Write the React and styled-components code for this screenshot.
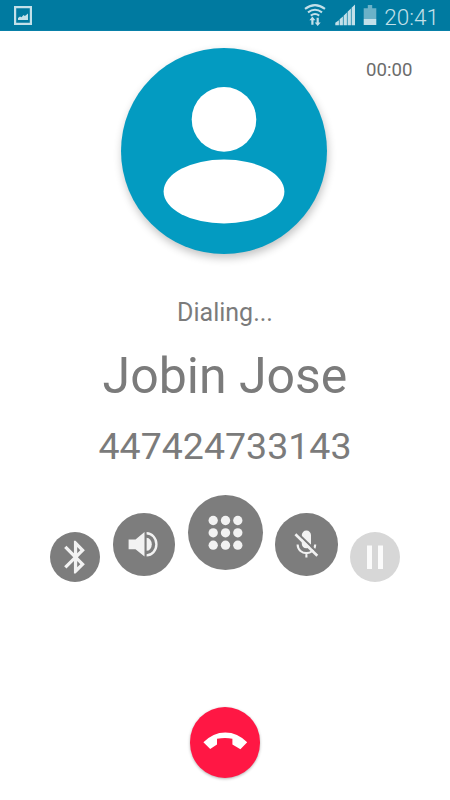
import React from "react";
import styled, { createGlobalStyle } from "styled-components";

const GlobalStyle = createGlobalStyle`
  body {
    margin: 0;
    background: #fff;
    font-family: Roboto, sans-serif;
  }
`;

const Screen = styled.main`
  display: flex;
  flex-direction: column;
  align-items: center;
  width: 450px;
  height: 800px;
  overflow: hidden;
  background: #fff;
`;

const StatusBar = styled.header`
  display: flex;
  align-items: center;
  box-sizing: border-box;
  width: 100%;
  height: 31px;
  flex: none;
  background: #007aa0;
  border-bottom: 1px solid #0880a8;
`;

const StatusIcons = styled.svg`
  display: block;
  width: ${(p) => p.$width}px;
  height: 30px;
  margin-left: ${(p) => p.$left || 0}px;
  fill: #c3e0e9;
`;

const Clock = styled.time`
  margin-left: auto;
  padding: 3px 11px 0 0;
  color: #c3e0e9;
  font-size: 22.5px;
  font-weight: 300;
  line-height: 26px;
`;

const Hero = styled.section`
  display: grid;
  grid-template-columns: 120.5px 206px 1fr;
  width: 100%;
  padding-top: 17px;
  flex: none;
`;

const Avatar = styled.div`
  grid-column: 2;
  width: 206px;
  height: 206px;
  border-radius: 50%;
  background: #039bc1;
  box-shadow: 1px 4px 8px rgba(0, 0, 0, 0.24);

  svg {
    display: block;
    fill: #fff;
  }
`;

const Timer = styled.time`
  padding: 11px 0 0 39.6px;
  color: #6c6c6c;
  font-size: 18.6px;
  line-height: 22px;
`;

const CallInfo = styled.section`
  display: flex;
  flex-direction: column;
  align-items: center;
  color: #7b7b7b;
  padding-top: 43.5px;
`;

const CallState = styled.p`
  margin: 0;
  font-size: 25px;
  line-height: 30px;
`;

const ContactName = styled.h1`
  margin: 19px 0 0;
  font-size: 50px;
  font-weight: 400;
  line-height: 58px;
`;

const PhoneNumber = styled.p`
  margin: 19px 0 0;
  font-size: 37.5px;
  line-height: 44px;
`;

const Controls = styled.nav`
  display: flex;
  align-items: flex-end;
  gap: 12.5px;
  height: 87.5px;
  margin-top: 27px;
`;

const RoundButton = styled.button`
  width: ${(p) => p.$size}px;
  height: ${(p) => p.$size}px;
  margin: 0 0 ${(p) => p.$lift || 0}px;
  padding: 0;
  border: 0;
  border-radius: 50%;
  flex: none;
  background: ${(p) => p.$color || "#7d7d7d"};
  box-shadow: ${(p) => p.$shadow || "none"};

  svg {
    display: block;
    fill: #f2f2f2;
  }
`;

const Footer = styled.footer`
  margin-top: 125px;
`;

function ControlButton({ label, size, children, ...rest }) {
  return (
    <RoundButton aria-label={label} $size={size} {...rest}>
      <svg width={size} height={size} viewBox={`0 0 ${size} ${size}`}>
        {children}
      </svg>
    </RoundButton>
  );
}

const DOT_X = [25.2, 37.5, 49.8];
const DOT_Y = [25.5, 37.8, 50.2];

export default function App() {
  return (
    <>
      <GlobalStyle />
      <Screen>
        <StatusBar>
          <StatusIcons $width={18} $left={14} viewBox="14 0 18 30">
            <path fillRule="evenodd" d="M14 6h18v19H14zM16.2 8.2v14.6h13.6V8.2z" />
            <path d="M18 20v-2l2-1.5 1.5.8 2-2.3 1.4 1 3.1-2.5V20z" />
          </StatusIcons>
          <StatusIcons $width={76} $left={272} viewBox="304 0 76 30">
            <g fill="none" stroke="#c3e0e9" strokeWidth="2">
              <path d="M305 8.9Q315 1.3 325 8.9" />
              <path d="M308 12.4Q315 7 322 12.4" />
              <path d="M310.8 15.6Q315 12.4 319.2 15.6" />
            </g>
            <path d="M312.4 16.6l3 3.6h-1.9v4.6h-2.2v-4.6h-1.9zM317.7 26l-3-3.6h1.9v-4.6h2.2v4.6h1.9z" />
            <path d="M335.3 25.3v-2.5l3.6-2.6v5.1zM339.6 25.3v-6l3.3-2.8v8.8zM343.6 25.3v-9.6l3.3-3.2v12.8zM347.6 25.3V11.8l3.3-3.2v16.7zM351.6 25.3V7.8l3.4-3.2v20.7z" />
            <path opacity=".55" d="M363.7 8.2h4.1V5.1h4.4v3.1h4.1V19h-12.6z" />
            <path d="M363.7 19h12.6v6h-12.6z" />
          </StatusIcons>
          <Clock>20:41</Clock>
        </StatusBar>

        <Hero>
          <Avatar>
            <svg width="206" height="206" viewBox="0 0 206 206">
              <circle cx="103" cy="71.4" r="32.3" />
              <ellipse cx="103" cy="143.5" rx="60.4" ry="32" />
            </svg>
          </Avatar>
          <Timer>00:00</Timer>
        </Hero>

        <CallInfo>
          <CallState>Dialing...</CallState>
          <ContactName>Jobin Jose</ContactName>
          <PhoneNumber>447424733143</PhoneNumber>
        </CallInfo>

        <Controls>
          <ControlButton label="Bluetooth" size={50}>
            <path
              transform="translate(6 5.6) scale(1.63)"
              d="M17.71 7.71L12 2h-1v7.59L6.41 5 5 6.41 10.59 12 5 17.59 6.41 19 11 14.41V22h1l5.71-5.71-4.3-4.29 4.3-4.29zM13 5.83l1.88 1.88L13 9.59V5.83zm1.88 10.46L13 18.17v-3.76l1.88 1.88z"
            />
          </ControlButton>
          <ControlButton label="Speaker" size={62.5} $lift={6.2}>
            <path d="M15.6 26.4h6.9l9-7.3v24.4l-9-7.3h-6.9z" />
            <path d="M33.6 24.8a5.2 6.5 0 0 1 0 13z" />
            <path d="M33.6 19.1a11 12.2 0 0 1 0 24.4v-2.3a8.6 9.9 0 0 0 0-19.8z" />
          </ControlButton>
          <ControlButton label="Keypad" size={75} $lift={12.5}>
            {DOT_Y.map((y) =>
              DOT_X.map((x) => <circle key={`${x}-${y}`} cx={x} cy={y} r="4.65" />)
            )}
          </ControlButton>
          <ControlButton label="Mute" size={62.5} $lift={6.2}>
            <rect x="26.8" y="17.6" width="9.2" height="17.6" rx="4.4" />
            <path
              d="M22.6 31.5C23 43 39.8 43 40.2 31.5M31.4 39.6V44.5"
              fill="none"
              stroke="#f2f2f2"
              strokeWidth="2.1"
            />
            <path
              d="M21.9 19.5L43.7 40.9"
              stroke="#7d7d7d"
              strokeWidth="2.2"
            />
            <path
              d="M20.4 21.3L42.3 42.7"
              stroke="#f2f2f2"
              strokeWidth="2.6"
            />
          </ControlButton>
          <ControlButton label="Hold" size={50} $color="#d7d7d7">
            <path fill="#fbfbfb" d="M17 13.4h5V37h-5zM28 13.4h5V37h-5z" />
          </ControlButton>
        </Controls>

        <Footer>
          <ControlButton
            label="End call"
            size={70.5}
            $color="#ff1744"
            $shadow="0 1px 3px rgba(0, 0, 0, 0.3)"
          >
            <path
              fill="#fff"
              d="M13.4 35.3Q23 25.4 35.3 25.4T57.2 35.3L50.4 42.2 42.4 37.6V31.8Q35.3 30.1 27 31.8V37.6L20.2 42z"
            />
          </ControlButton>
        </Footer>
      </Screen>
    </>
  );
}
